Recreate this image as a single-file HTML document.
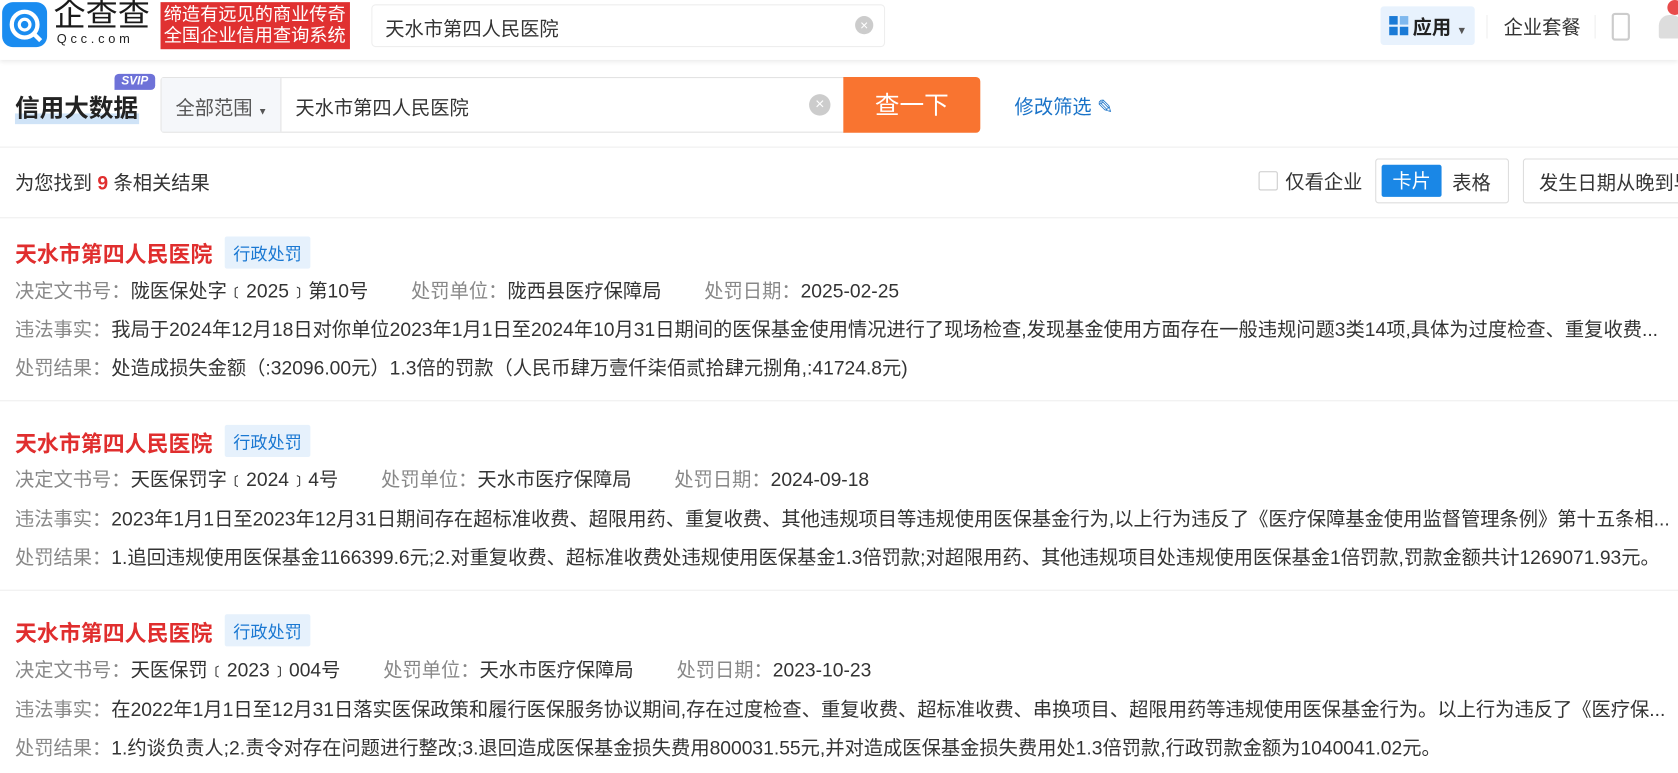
<!DOCTYPE html>
<html><head><meta charset="utf-8"><style>
*{margin:0;padding:0;box-sizing:border-box}
body{width:1678px;height:772px;overflow:hidden;background:#fff;font-family:"Liberation Sans","Noto Sans CJK SC",sans-serif;color:#333;position:relative}
#w{position:absolute;left:0;top:0;width:1568px;height:722px;transform:scale(1.0702);transform-origin:0 0}
.a{position:absolute;white-space:nowrap}
.hdr{position:absolute;left:0;top:0;width:1568px;height:56px;background:#fff;box-shadow:0 2px 4px rgba(0,0,0,.08)}
.t{font-size:18px;color:#333}
.l{color:#888}
.red{color:#e02e2e;font-weight:bold;font-size:20.5px}
.tag{background:#e6f1fc;color:#1a78d2;font-size:16px;padding:3px 8px;border-radius:2px}
.hr{position:absolute;left:0;width:1568px;height:1px;background:#eee}
</style></head><body><div id="w">
<div class="hdr"></div>
<div class="a" style="left:2px;top:2px;width:42px;height:42px;background:#1a8cf0;border-radius:10px"></div>
<svg class="a" style="left:2px;top:2px" width="42" height="42"><circle cx="21" cy="21" r="12" fill="none" stroke="#fff" stroke-width="4"/><circle cx="21" cy="21" r="5" fill="none" stroke="#fff" stroke-width="3"/><path d="M29 29 L36 36" stroke="#fff" stroke-width="4"/></svg>
<div class="a" style="left:50px;top:0px;font-size:30px;line-height:30px;color:#1a1a1a">企查查</div>
<div class="a" style="left:53px;top:29px;font-size:12px;letter-spacing:3.5px;color:#222">Qcc.com</div>
<div class="a" style="left:150px;top:2px;width:177px;height:44px;background:#e03131;color:#fff;font-size:17px;line-height:20px;padding:2px 0 0 3px">缔造有远见的商业传奇<br>全国企业信用查询系统</div>
<div class="a" style="left:347px;top:4px;width:480px;height:40px;border:1px solid #eee;border-radius:4px"></div>
<div class="a t" style="left:360px;top:13px">天水市第四人民医院</div>
<div class="a" style="left:799px;top:15px;width:17px;height:17px;border-radius:50%;background:#ccc;color:#fff;font-size:13px;line-height:17px;text-align:center">×</div>
<div class="a" style="left:1290px;top:6px;width:88px;height:36px;background:#e8f2fd;border-radius:3px"></div>
<svg class="a" style="left:1298px;top:15px" width="18" height="18"><rect x="0" y="0" width="8" height="8" fill="#1a7ad6"/><rect x="10" y="0" width="8" height="8" fill="#7fb8ee"/><rect x="0" y="10" width="8" height="8" fill="#1a7ad6"/><rect x="10" y="10" width="8" height="8" fill="#1a7ad6"/></svg>
<div class="a" style="left:1320px;top:12px;font-size:18px;font-weight:bold;color:#222">应用 <span style="font-size:10px;color:#555">▼</span></div>
<div class="a" style="left:1389px;top:14px;width:1px;height:22px;background:#eee"></div>
<div class="a t" style="left:1405px;top:12px">企业套餐</div>
<div class="a" style="left:1490px;top:14px;width:1px;height:22px;background:#eee"></div>
<div class="a" style="left:1506px;top:12px;width:17px;height:26px;border:2px solid #ccc;border-radius:3px"></div>
<div class="a" style="left:1550px;top:14px;width:22px;height:22px;background:#ddd;border-radius:10px 10px 2px 2px"></div>
<div class="a" style="left:1558px;top:0;width:14px;height:14px;background:#e84b4b;border-radius:50%"></div>
<div class="a" style="left:14px;top:106px;width:116px;height:10px;background:#cfe3f7"></div>
<div class="a" style="left:14px;top:82px;font-size:23px;font-weight:bold;color:#222">信用大数据</div>
<div class="a" style="left:107px;top:69px;width:38px;height:15px;background:#6e72d8;border-radius:4px 4px 4px 0;color:#fff;font-size:11px;font-weight:bold;font-style:italic;text-align:center;line-height:15px">SVIP</div>
<div class="a" style="left:150px;top:72px;width:640px;height:52px;border:1px solid #e3e3e3;border-radius:3px 0 0 3px"></div>
<div class="a" style="left:151px;top:73px;width:112px;height:50px;background:#f5f7fa;border-right:1px solid #e3e3e3"></div>
<div class="a" style="left:164px;top:87px;font-size:18px;color:#555">全部范围 <span style="font-size:9px">▼</span></div>
<div class="a t" style="left:276px;top:87px">天水市第四人民医院</div>
<div class="a" style="left:756px;top:88px;width:20px;height:20px;border-radius:50%;background:#ccc;color:#fff;font-size:15px;line-height:20px;text-align:center">×</div>
<div class="a" style="left:788px;top:72px;width:128px;height:52px;background:#f97430;border-radius:0 4px 4px 0;color:#fff;font-size:23px;text-align:center;line-height:52px">查一下</div>
<div class="a" style="left:948px;top:86px;font-size:18px;color:#1a73c8">修改筛选 ✎</div>
<div class="hr" style="top:137px"></div>
<div class="a t" style="left:14px;top:157px">为您找到 <b style="color:#e02e2e">9</b> 条相关结果</div>
<div class="a" style="left:1176px;top:160px;width:18px;height:18px;border:1px solid #ccc;border-radius:2px"></div>
<div class="a t" style="left:1201px;top:156px">仅看企业</div>
<div class="a" style="left:1285px;top:148px;width:125px;height:42px;border:1px solid #ddd;border-radius:3px"></div>
<div class="a" style="left:1291px;top:154px;width:56px;height:30px;background:#1a87e6;border-radius:2px;color:#fff;font-size:18px;text-align:center;line-height:30px">卡片</div>
<div class="a t" style="left:1357px;top:157px">表格</div>
<div class="a" style="left:1423px;top:148px;width:270px;height:42px;border:1px solid #ddd;border-radius:3px"></div>
<div class="a t" style="left:1438px;top:157px">发生日期从晚到早</div>
<div class="hr" style="top:203px"></div>

<div class="a red" style="left:14px;top:221px">天水市第四人民医院</div>
<div class="a tag" style="left:210px;top:221px">行政处罚</div>
<div class="a t" style="left:14px;top:258px"><span class="l">决定文书号：</span>陇医保处字﹝2025﹞第10号<span class="l" style="margin-left:40px">处罚单位：</span>陇西县医疗保障局<span class="l" style="margin-left:40px">处罚日期：</span>2025-02-25</div>
<div class="a t" style="left:14px;top:294px"><span class="l">违法事实：</span>我局于2024年12月18日对你单位2023年1月1日至2024年10月31日期间的医保基金使用情况进行了现场检查,发现基金使用方面存在一般违规问题3类14项,具体为过度检查、重复收费...</div>
<div class="a t" style="left:14px;top:330px"><span class="l">处罚结果：</span>处造成损失金额（:32096.00元）1.3倍的罚款（人民币肆万壹仟柒佰贰拾肆元捌角,:41724.8元)</div>
<div class="hr" style="top:374px"></div>
<div class="a red" style="left:14px;top:398px">天水市第四人民医院</div>
<div class="a tag" style="left:210px;top:397px">行政处罚</div>
<div class="a t" style="left:14px;top:434px"><span class="l">决定文书号：</span>天医保罚字﹝2024﹞4号<span class="l" style="margin-left:40px">处罚单位：</span>天水市医疗保障局<span class="l" style="margin-left:40px">处罚日期：</span>2024-09-18</div>
<div class="a t" style="left:14px;top:471px"><span class="l">违法事实：</span>2023年1月1日至2023年12月31日期间存在超标准收费、超限用药、重复收费、其他违规项目等违规使用医保基金行为,以上行为违反了《医疗保障基金使用监督管理条例》第十五条相...</div>
<div class="a t" style="left:14px;top:507px"><span class="l">处罚结果：</span>1.追回违规使用医保基金1166399.6元;2.对重复收费、超标准收费处违规使用医保基金1.3倍罚款;对超限用药、其他违规项目处违规使用医保基金1倍罚款,罚款金额共计1269071.93元。</div>
<div class="hr" style="top:551px"></div>
<div class="a red" style="left:14px;top:575px">天水市第四人民医院</div>
<div class="a tag" style="left:210px;top:574px">行政处罚</div>
<div class="a t" style="left:14px;top:612px"><span class="l">决定文书号：</span>天医保罚﹝2023﹞004号<span class="l" style="margin-left:40px">处罚单位：</span>天水市医疗保障局<span class="l" style="margin-left:40px">处罚日期：</span>2023-10-23</div>
<div class="a t" style="left:14px;top:649px"><span class="l">违法事实：</span>在2022年1月1日至12月31日落实医保政策和履行医保服务协议期间,存在过度检查、重复收费、超标准收费、串换项目、超限用药等违规使用医保基金行为。以上行为违反了《医疗保...</div>
<div class="a t" style="left:14px;top:685px"><span class="l">处罚结果：</span>1.约谈负责人;2.责令对存在问题进行整改;3.退回造成医保基金损失费用800031.55元,并对造成医保基金损失费用处1.3倍罚款,行政罚款金额为1040041.02元。</div>
</div></body></html>
